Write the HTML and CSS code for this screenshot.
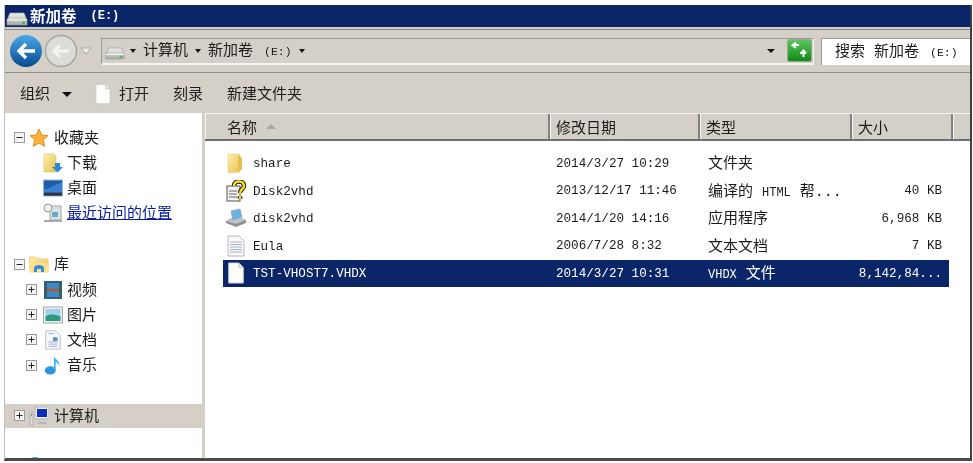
FILE: index.html
```html
<!DOCTYPE html>
<html lang="zh">
<head>
<meta charset="utf-8">
<title>新加卷 (E:)</title>
<link rel="stylesheet" href="styles.css">
</head>
<body>
<svg class="defs" width="0" height="0" aria-hidden="true">
  <defs>
    <linearGradient id="fold" x1="0" y1="0" x2="1" y2="1"><stop offset="0" stop-color="#fff0b0"/><stop offset="1" stop-color="#e8c050"/></linearGradient>
    <linearGradient id="blue" x1="0" y1="0" x2="0" y2="1"><stop offset="0" stop-color="#4aa8e8"/><stop offset="1" stop-color="#064a90"/></linearGradient>
    <linearGradient id="green" x1="0" y1="0" x2="0" y2="1"><stop offset="0" stop-color="#5cc85c"/><stop offset="1" stop-color="#0e8a14"/></linearGradient>
    <linearGradient id="drive" x1="0" y1="0" x2="0" y2="1"><stop offset="0" stop-color="#f2f2f0"/><stop offset="1" stop-color="#a8aca8"/></linearGradient>
    <symbol id="i-drive" viewBox="0 0 22 14"><path d="M4 1h14l3 7v5H1V8z" fill="url(#drive)" stroke="#9a9e9a" stroke-width=".8"/><path d="M1 8h20" stroke="#fff"/><rect x="16" y="9.5" width="3" height="2.5" fill="#52b848"/></symbol>
    <symbol id="i-page" viewBox="0 0 18 24"><path d="M1 1h11l5 5v17H1z" fill="#fdfdfb" stroke="#c8c8c4"/><path d="M12 1v5h5" fill="#e4e4e0" stroke="#c8c8c4"/></symbol>
    <symbol id="i-plus" viewBox="0 0 11 11"><rect x=".5" y=".5" width="10" height="10" fill="#f4f4f4" stroke="#9a9a9a"/><path d="M2.5 5.5h6M5.5 2.5v6" stroke="#222"/></symbol>
    <symbol id="i-minus" viewBox="0 0 11 11"><rect x=".5" y=".5" width="10" height="10" fill="#f4f4f4" stroke="#9a9a9a"/><path d="M2.5 5.5h6" stroke="#222"/></symbol>
  </defs>
</svg>
<main class="window">
  <header class="titlebar">
    <svg class="ic-title"><use href="#i-drive"/></svg>
    <span class="title-text">新加卷</span><span class="title-drive">(E:)</span>
  </header>
  <div class="navband">
    <svg class="nav-btns" viewBox="0 0 90 34" width="90" height="34">
      <circle cx="52" cy="17" r="15.500" fill="#dcdcd8" stroke="#a4a4a0" stroke-width="1.4"/>
      <path d="M60 17H46M51 11l-6 6 6 6" fill="none" stroke="#f4f4f2" stroke-width="3"/>
      <circle cx="17" cy="17" r="16" fill="url(#blue)"/>
      <path d="M26 17H10M17 10l-7 7 7 7" fill="none" stroke="#fff" stroke-width="3.4"/>
      <path d="M72 14h10l-5 6z" fill="#f0f0ee" stroke="#a8a8a4"/>
    </svg>
    <div class="addr">
      <svg class="ic-addr"><use href="#i-drive"/></svg>
      <span class="crumb-sep sep-first"></span>
      <span class="crumb">计算机</span>
      <span class="crumb-sep"></span>
      <span class="crumb">新加卷<span class="crumb-drive">(E:)</span></span>
      <span class="crumb-sep"></span>
      <span class="crumb-sep addr-drop"></span>
      <svg class="refresh" viewBox="0 0 25 23" width="25" height="23">
        <rect x=".5" y=".5" width="24" height="22" rx="2" fill="url(#green)" stroke="#9aa89a"/>
        <path d="M12 6H7M9 3.5 5.5 6.5 9 9M13 14h6M16.5 18v-6M14 14.5l2.500-3 2.500 3" fill="none" stroke="#fff" stroke-width="2"/>
      </svg>
    </div>
    <div class="search"><span>搜索 新加卷<span class="search-drive">(E:)</span></span></div>
  </div>
  <div class="toolbar">
    <span class="tool">组织</span><span class="crumb-sep tool-arrow"></span>
    <svg class="ic-tool"><use href="#i-page"/></svg>
    <span class="tool">打开</span>
    <span class="tool tool-burn">刻录</span>
    <span class="tool tool-new">新建文件夹</span>
  </div>
  <div class="panes">
    <nav class="tree">
      <div class="node root">
        <svg class="exp"><use href="#i-minus"/></svg>
        <svg class="ic" viewBox="0 0 20 20"><path d="m10 1 2.700 6 6.300.6-4.700 4.300 1.400 6.400L10 15l-5.700 3.300 1.400-6.400L1 7.600 7.300 7z" fill="#fbb13c" stroke="#e98a20"/></svg>
        <span>收藏夹</span>
      </div>
      <div class="node leaf">
        <svg class="ic" viewBox="0 0 20 20"><path d="M1 1h10l2 2v16H1z" fill="url(#fold)" stroke="#e0c070" stroke-width=".6"/><path d="M12 10h5v4h3l-5.500 5.500L9 14h3z" fill="#2c88d8"/></svg>
        <span>下载</span>
      </div>
      <div class="node leaf">
        <svg class="ic" viewBox="0 0 20 17"><rect x=".5" y=".5" width="19" height="16" fill="#1e5caa" stroke="#9cb8d8"/><path d="M1 13h18v3H1z" fill="#333"/><path d="M1 10c5-1 9-4 18-7v10H1z" fill="#3a80d0"/></svg>
        <span>桌面</span>
      </div>
      <div class="node leaf">
        <svg class="ic" viewBox="0 0 20 20"><rect x="7" y="3" width="11" height="14" fill="#d8e4e4" stroke="#9aa4a4"/><circle cx="5" cy="5" r="4" fill="#f0f0f0" stroke="#9a9a9a"/><rect x="9" y="9" width="6" height="5" fill="#6aa8c8"/><path d="M1 17h18v2H1z" fill="#a8a8a8"/></svg>
        <a class="link">最近访问的位置</a>
      </div>
      <div class="node root gap">
        <svg class="exp"><use href="#i-minus"/></svg>
        <svg class="ic" viewBox="0 0 20 20"><path d="M0 3h7l2 2h10v13H1z" fill="url(#fold)" stroke="#e6bc60" stroke-width=".7"/><path d="M0 9h20l-1 9H1z" fill="#ffe08c"/><path d="M5 18v-4c0-4 10-4 10 0v4h-3v-3H8v3z" fill="#3c8cd0"/></svg>
        <span>库</span>
      </div>
      <div class="node sub">
        <svg class="exp"><use href="#i-plus"/></svg>
        <svg class="ic" viewBox="0 0 20 20"><rect x="1" y="1" width="18" height="18" fill="#34606c"/><path d="M4 3h12v6H4zM4 11h12v6H4z" fill="#3c88c8"/><path d="M4 9c4-3 8 3 12-1v3c-4 3-8-3-12 1z" fill="#b05c30"/></svg>
        <span>视频</span>
      </div>
      <div class="node sub">
        <svg class="exp"><use href="#i-plus"/></svg>
        <svg class="ic" viewBox="0 0 20 17"><rect x=".5" y=".5" width="19" height="16" fill="#eee" stroke="#a8a8a8"/><rect x="2.500" y="2.500" width="15" height="12" fill="#9cd0ec"/><path d="M2.500 10c5-3 10-2 15 0v4.500h-15z" fill="#2c9a80"/></svg>
        <span>图片</span>
      </div>
      <div class="node sub">
        <svg class="exp"><use href="#i-plus"/></svg>
        <svg class="ic" viewBox="0 0 20 22"><path d="M2 1h11l5 5v15H2z" fill="#f6f8fc" stroke="#b4b8c0"/><path d="M5 4h6M5 13h10M5 15.500h10M5 18h10" stroke="#98a8c8"/><rect x="10" y="8" width="5" height="4" fill="#5a8cc0"/></svg>
        <span>文档</span>
      </div>
      <div class="node sub">
        <svg class="exp"><use href="#i-plus"/></svg>
        <svg class="ic" viewBox="0 0 20 22"><ellipse cx="7" cy="17" rx="6" ry="4.500" fill="#2c94e0"/><path d="M11 17V1c1 4 7 5 6 11-1-3-3-4-4-4v9z" fill="#4cb0f0"/></svg>
        <span>音乐</span>
      </div>
      <div class="node root gap selected">
        <svg class="exp"><use href="#i-plus"/></svg>
        <svg class="ic" viewBox="0 0 20 20"><rect x="6" y="1" width="14" height="12" fill="#eceef0" stroke="#b0b4b8"/><rect x="8" y="3" width="10" height="8" fill="#0c2cc0"/><path d="M9 16h8v2H9z" fill="#b4b8bc"/><rect x="1" y="6" width="3" height="13" fill="#dcdcdc" stroke="#999" stroke-width=".6"/><rect x="2" y="8" width="1" height="2" fill="#4cb848"/></svg>
        <span>计算机</span>
      </div>
      <div class="node root net">
        <svg class="ic ic-net" viewBox="0 0 20 20"><circle cx="10" cy="10" r="8" fill="#4c9ccc"/></svg>
      </div>
    </nav>
    <section class="files">
      <div class="cols head">
        <div class="hcell"><span>名称</span><i class="sort"></i></div>
        <div class="hcell"><span>修改日期</span></div>
        <div class="hcell"><span>类型</span></div>
        <div class="hcell"><span>大小</span></div>
        <div class="hcell"></div>
      </div>
      <div class="rows">
        <div class="cols row">
          <div class="name"><svg class="fic" viewBox="0 0 20 22"><path d="M2 2h10l2 1v17l-12 1z" fill="url(#fold)" stroke="#e8cc80" stroke-width=".6"/><path d="M12 3l4 3v11l-4 3z" fill="#e6bc50"/></svg><span>share</span></div>
          <div class="date">2014/3/27 10:29</div><div class="type">文件夹</div><div class="size"></div>
        </div>
        <div class="cols row">
          <div class="name"><svg class="fic" viewBox="0 0 20 22"><rect x="1" y="6" width="13" height="15" fill="#f4f4f4" stroke="#555"/><path d="M3 11h8M3 14h8M3 17h8" stroke="#666"/><path d="M8 6c0-6 10-6 10 0 0 3-4 3-4 7M14 16v3" fill="none" stroke="#111" stroke-width="4.500"/><path d="M8 6c0-6 10-6 10 0 0 3-4 3-4 7M14 16v3" fill="none" stroke="#f6e020" stroke-width="2.600"/></svg><span>Disk2vhd</span></div>
          <div class="date">2013/12/17 11:46</div><div class="type">编译的 <span class="latin">HTML</span> 帮...</div><div class="size">40 KB</div>
        </div>
        <div class="cols row">
          <div class="name"><svg class="fic" viewBox="0 0 22 20"><path d="M1 13l10-5 10 4v3l-10 4-10-4z" fill="#8c9094"/><path d="M1 13l10 3 10-4-10-4z" fill="#c0c4c8"/><path d="M6 3l9-2 2 8-9 3z" fill="#6cb0e0" stroke="#8cb0d0"/></svg><span>disk2vhd</span></div>
          <div class="date">2014/1/20 14:16</div><div class="type">应用程序</div><div class="size">6,968 KB</div>
        </div>
        <div class="cols row">
          <div class="name"><svg class="fic" viewBox="0 0 18 22"><path d="M1 1h11l5 5v15H1z" fill="#f8f8f8" stroke="#b8b8b8"/><path d="M3 7h12M3 9.500h12M3 12h12M3 14.500h12M3 17h12" stroke="#a8b4c8"/></svg><span>Eula</span></div>
          <div class="date">2006/7/28 8:32</div><div class="type">文本文档</div><div class="size">7 KB</div>
        </div>
        <div class="cols row active">
          <div class="name"><svg class="fic" viewBox="0 0 18 24"><use href="#i-page"/></svg><span>TST-VHOST7.VHDX</span></div>
          <div class="date">2014/3/27 10:31</div><div class="type"><span class="latin">VHDX</span> 文件</div><div class="size">8,142,84...</div>
        </div>
      </div>
    </section>
  </div>
</main>
</body>
</html>
```

FILE: styles.css
```css
html, body {
  margin: 0;
  height: 463px;
  overflow: hidden;
  background: #fff;
}
body {
  padding: 5px 1px 2px 4px;
  box-sizing: border-box;
  font-family: "Liberation Mono", "Noto Sans CJK SC", monospace;
  font-size: 15px;
  color: #1c1c1c;
  filter: blur(.55px);
}
.defs { position: absolute; }
.window {
  height: 456px;
  display: flex;
  flex-direction: column;
  background: #d4d0c8;
  border-left: 1px solid #c4c0b8;
  border-right: 2px solid #404040;
  border-bottom: 3px solid #4a4a4a;
  box-sizing: border-box;
  overflow: hidden;
}
.titlebar {
  height: 22px;
  flex: none;
  background: #0a2668;
  color: #fff;
  display: flex;
  align-items: center;
  padding-left: 1px;
  font-weight: 700;
  font-size: 15.500px;
}
.ic-title { width: 22px; height: 14px; margin-top: 5px; }
.title-text { margin-left: 2px; padding-bottom: 2px; }
.title-drive { margin-left: 14px; font-size: 12px; padding-bottom: 1px; }
.navband {
  height: 44px;
  flex: none;
  margin-top: 2px;
  border-top: 1px solid #8c8c88;
  border-bottom: 1px solid #8c8c88;
  box-sizing: border-box;
  display: flex;
  align-items: center;
  padding-left: 4px;
}
.nav-btns { flex: none; }
.addr {
  width: 711px;
  height: 24px;
  margin-left: 2px;
  border: 1px solid #999;
  border-right-color: #f4f4f2;
  border-bottom: 2px solid #f4f4f2;
  display: flex;
  align-items: center;
}
.ic-addr { width: 20px; height: 13px; margin-left: 3px; margin-top: 5px; flex: none; }
.crumb-sep {
  width: 0;
  height: 0;
  border: 3.500px solid transparent;
  border-top: 4px solid #111;
  border-bottom: 0;
  flex: none;
  margin: 0 7px;
}
.sep-first { margin-left: 5px; }
.crumb { padding-bottom: 4px; }
.crumb-drive { font-size: 11.500px; margin-left: 11px; }
.addr-drop { margin-left: auto; margin-right: 12px; border-width: 4px; }
.refresh { flex: none; margin-right: 1px; }
.search {
  margin-left: 7px;
  flex: 1;
  height: 26px;
  background: #fff;
  border-left: 1px solid #999;
  border-top: 1px solid #999;
  display: flex;
  align-items: center;
  padding-left: 13px;
  white-space: pre;
}
.search > span { padding-bottom: 3px; }
.search-drive { font-size: 11.500px; margin-left: 11px; }
.toolbar {
  height: 38px;
  flex: none;
  margin-top: 2px;
  display: flex;
  align-items: center;
  padding-left: 15px;
}
.tool { padding-bottom: 2px; }
.tool-arrow { margin: 0 0 0 12px; border-width: 5px; border-top-width: 5px; border-bottom-width: 0; }
.ic-tool { width: 16px; height: 22px; margin: 0 8px 0 23px; }
.tool-burn { margin-left: 24px; }
.tool-new { margin-left: 24px; }
.panes {
  flex: 1;
  min-height: 0;
  display: flex;
  gap: 3px;
}
.tree {
  width: 197px;
  flex: none;
  background: #fff;
  padding-top: 12px;
  overflow: hidden;
}
.node {
  height: 25.200px;
  display: flex;
  align-items: center;
  white-space: nowrap;
}
.node > span, .node > a { padding-bottom: 2px; }
.exp { width: 11px; height: 11px; flex: none; }
.ic { width: 20px; height: 20px; flex: none; }
.root { padding-left: 9px; }
.root .ic { margin: 0 5px 0 4px; }
.leaf { padding-left: 37px; }
.leaf .ic { margin-right: 4px; margin-left: 1px; }
.sub { padding-left: 21px; }
.sub .ic { margin: 0 4px 0 6px; }
.gap { margin-top: 26px; }
.link { color: #0a1e9c; text-decoration: underline; }
.selected { background: #d4d0c8; height: 24px; }
.net { margin-top: 25px; }
.root .ic-net { margin-left: 11px; }
.files {
  flex: 1;
  min-width: 0;
  background: #fff;
  overflow: hidden;
  font-size: 12.600px;
}
.cols {
  display: grid;
  grid-template-columns: 345px 150px 152px 101px 1fr;
  align-items: center;
}
.head {
  height: 28px;
  background: #d4d0c8;
  border-top: 1px solid #f6f6f4;
  border-bottom: 2px solid #707070;
  box-sizing: border-box;
  font-size: 15px;
}
.hcell {
  height: 100%;
  display: flex;
  align-items: center;
  padding-left: 6px;
  box-sizing: border-box;
  border-right: 2px solid #808080;
  box-shadow: inset 1px 0 0 #f6f6f4;
}
.hcell:first-child { padding-left: 22px; }
.hcell:last-child { border-right: 0; }
.sort {
  width: 0;
  height: 0;
  border: 5px solid transparent;
  border-bottom: 5px solid #a8a8a4;
  border-top: 0;
  margin-left: 9px;
}
.rows { padding-top: 8.300px; }
.row {
  height: 27.600px;
  margin-right: 21px;
  white-space: nowrap;
  grid-template-columns: 345px 150px 152px 91px;
}
.date { padding: 1px 0 0 6px; }
.type { padding: 0 0 2px 8px; font-size: 15px; }
.latin { font-size: 12px; }
.name {
  display: flex;
  align-items: center;
  padding-left: 20px;
  height: 100%;
}
.name > span { padding-top: 2px; }
.fic { width: 22px; height: 22px; flex: none; margin-right: 6px; }
.size { text-align: right; padding: 1px 1px 0 0; }
.active {
  background: #0a2668;
  color: #fff;
  margin-left: 18px;
  grid-template-columns: 327px 150px 152px 91px;
}
.active .name { padding-left: 2px; }
```
